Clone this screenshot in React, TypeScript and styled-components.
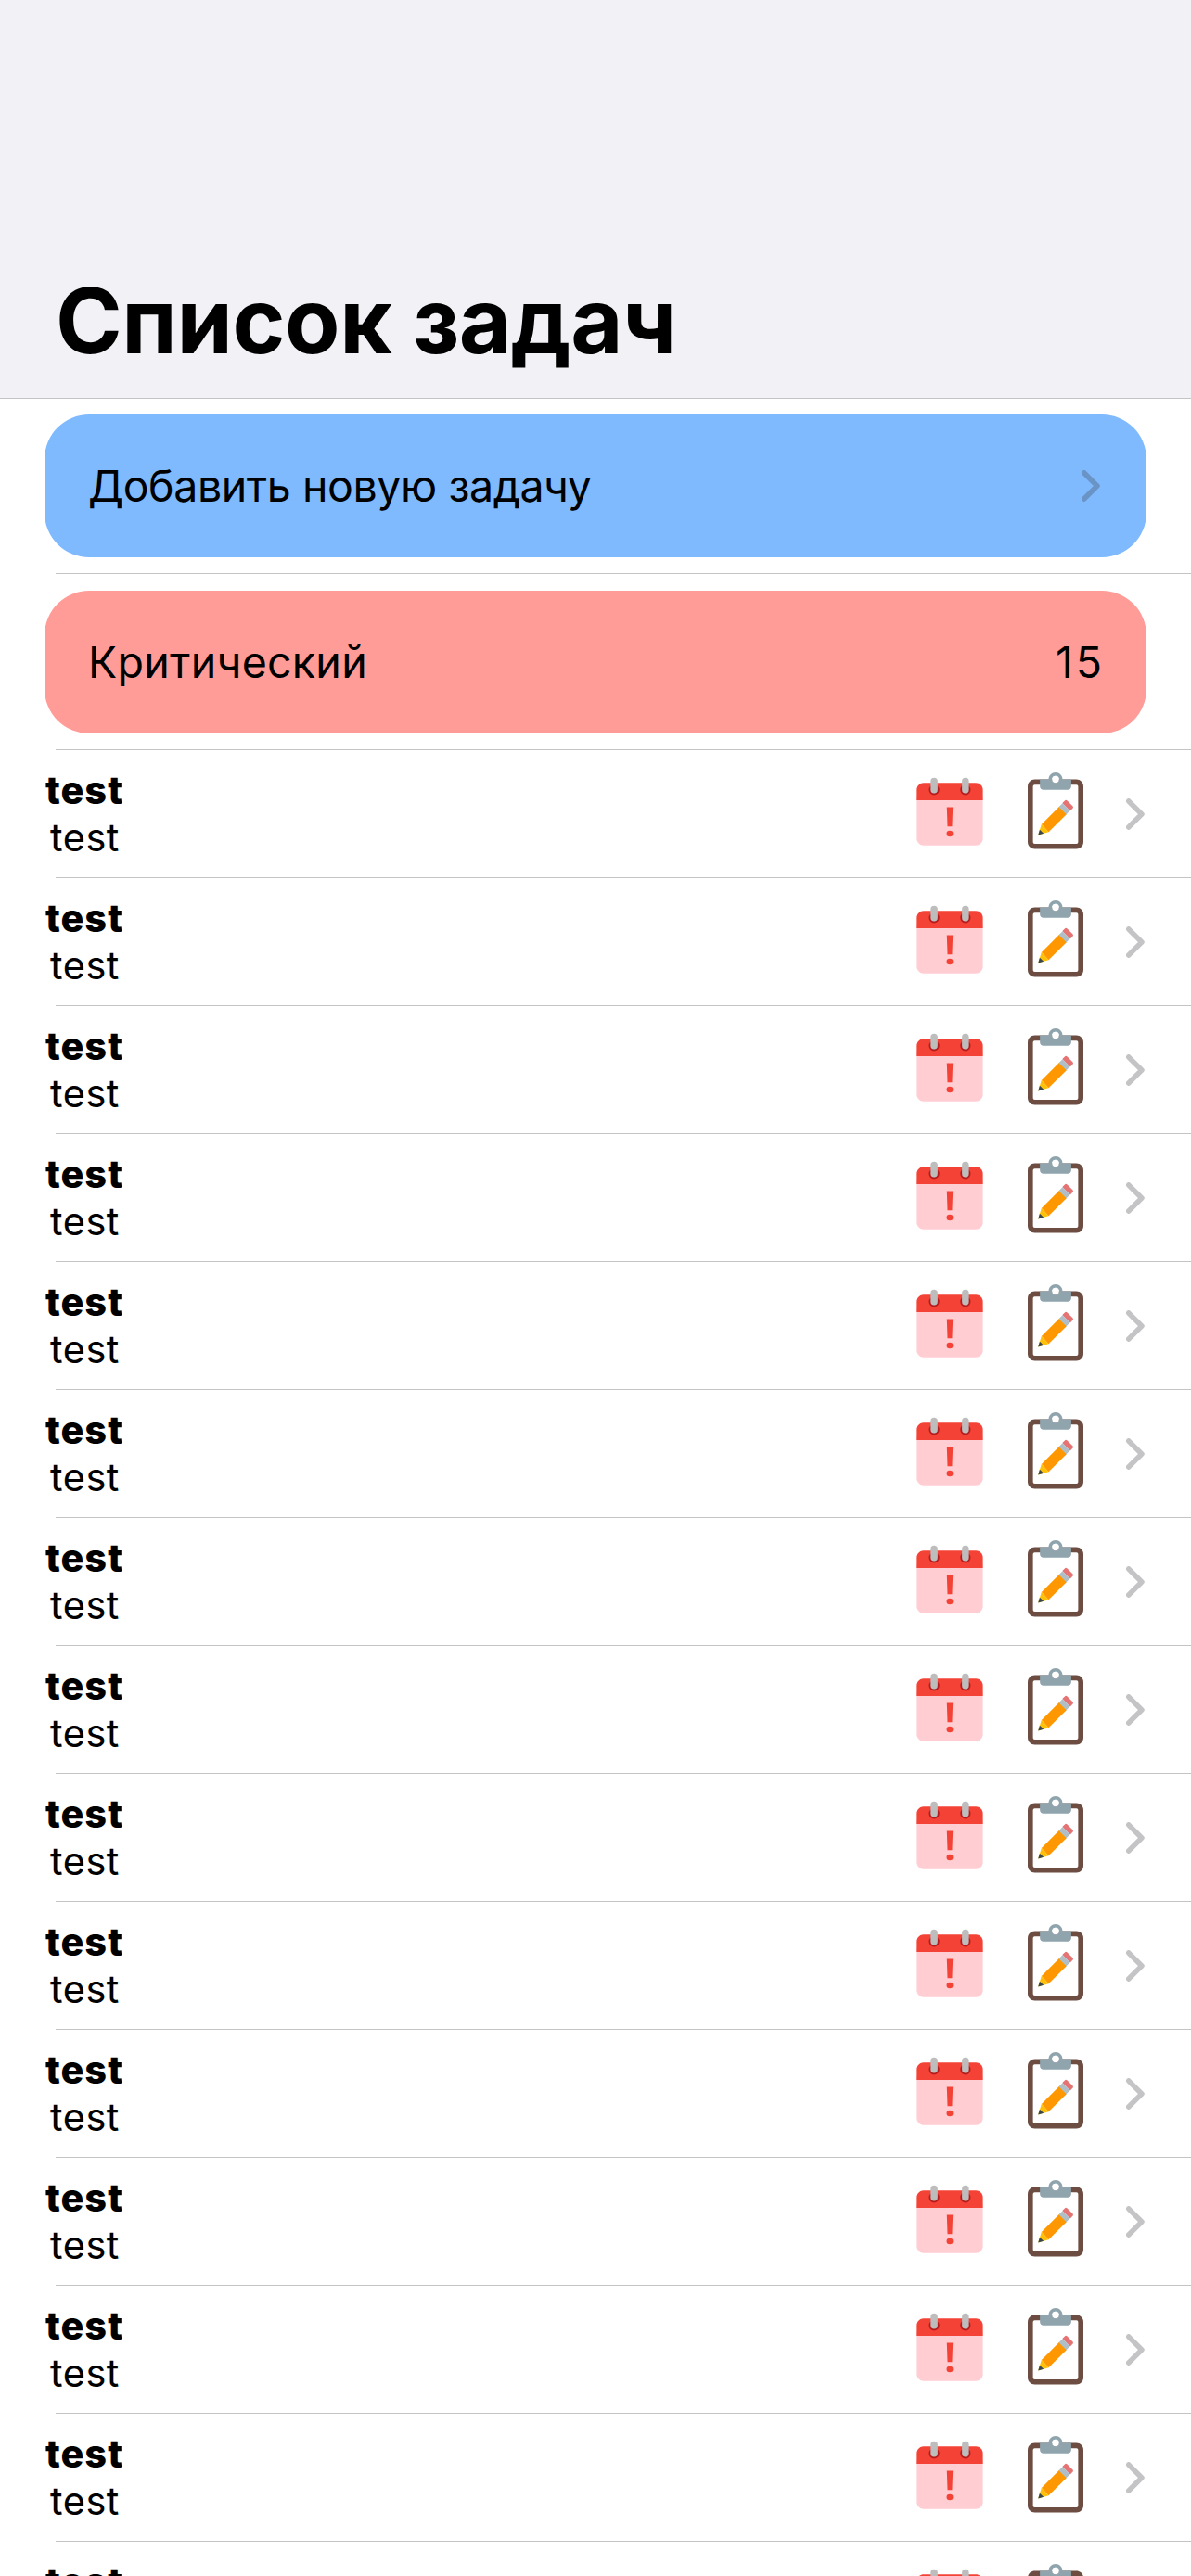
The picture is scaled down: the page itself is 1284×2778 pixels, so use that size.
import React from 'react';
import styled, { createGlobalStyle } from 'styled-components';

const GlobalStyle = createGlobalStyle`
  *, *::before, *::after { box-sizing: border-box; }
  html, body { margin: 0; padding: 0; }
  body {
    background: #fff;
    color: #000;
    font-family: Inter, 'Liberation Sans', sans-serif;
  }
`;

const Screen = styled.main`
  width: 1284px;
  height: 2778px;
  overflow: hidden;
  background: #fff;
`;

const Header = styled.header`
  display: flex;
  align-items: flex-end;
  height: 430px;
  padding: 0 60px 23px;
  background: #f2f1f6;
  border-bottom: 1px solid #c4c4c6;
`;

const Title = styled.h1`
  margin: 0;
  font-size: 97px;
  font-weight: 700;
  line-height: 120px;
  letter-spacing: -0.4px;
  white-space: nowrap;
`;

const List = styled.ul`
  margin: 0;
  padding: 0;
  list-style: none;
`;

const Item = styled.li<{ $height: number; $pad?: string }>`
  display: flex;
  flex-direction: column;
  height: ${(p) => p.$height}px;
  padding: ${(p) => p.$pad ?? '0'};

  &::after {
    content: '';
    flex: none;
    height: 1px;
    margin-left: 60px;
    background: #c4c4c6;
  }
`;

const Pill = styled.div<{ $color: string }>`
  display: flex;
  flex: none;
  align-items: center;
  justify-content: space-between;
  height: 154px;
  margin: 0 48px 17px;
  padding: 0 50px 0 47px;
  border-radius: 48px;
  background: ${(p) => p.$color};
`;

const PillLabel = styled.span<{ $tracking: number }>`
  font-size: 46.5px;
  line-height: 60px;
  letter-spacing: ${(p) => p.$tracking}px;
  white-space: nowrap;
`;

const Count = styled(PillLabel)`
  margin-right: -4.7px;
`;

const TaskBody = styled.div`
  display: flex;
  flex: 1;
  align-items: center;
  padding: 0 50px 0 49px;
`;

const TaskText = styled.div`
  display: flex;
  flex-direction: column;
  align-items: center;
  margin-right: auto;
`;

const TaskName = styled.span`
  font-size: 41.5px;
  font-weight: 800;
  line-height: 51px;
  letter-spacing: 1px;
`;

const TaskNote = styled.span`
  padding-left: 1px;
  font-size: 41.5px;
  font-weight: 430;
  line-height: 51px;
  letter-spacing: 0.5px;
`;

const IconGroup = styled.div`
  display: flex;
  gap: 24px;
  margin-right: 31px;
`;

const Icon = styled.svg`
  display: block;
  width: 90px;
  height: 90px;
`;

const ChevronIcon = styled.svg`
  display: block;
  flex: none;
  width: 20px;
  height: 34px;
`;

const Chevron = () => (
  <ChevronIcon viewBox="0 0 20 34" fill="none">
    <path
      d="M2.8 2.9 16.9 17 2.8 31.1"
      stroke="#3c3c43"
      strokeOpacity="0.3"
      strokeWidth="5.6"
      strokeLinecap="round"
      strokeLinejoin="round"
    />
  </ChevronIcon>
);

const OverdueCalendar = () => (
  <Icon viewBox="0 0 48 48">
    <path fill="#ffcdd2" d="M5 38V14h38v24c0 2.2-1.8 4-4 4H9c-2.2 0-4-1.8-4-4z" />
    <path fill="#f44336" d="M43 10v6H5v-6c0-2.2 1.8-4 4-4h30c2.2 0 4 1.8 4 4z" />
    <circle cx="33" cy="10" r="3" fill="#b71c1c" />
    <circle cx="15" cy="10" r="3" fill="#b71c1c" />
    <rect x="31" y="3" width="4" height="9" rx="2" fill="#bdbdbd" />
    <rect x="13" y="3" width="4" height="9" rx="2" fill="#bdbdbd" />
    <path fill="#f44336" d="M22.3 20h3.4l-.4 11h-2.6z" />
    <ellipse cx="24" cy="35.2" rx="1.85" ry="1.75" fill="#f44336" />
  </Icon>
);

const ClipboardPencil = () => (
  <Icon viewBox="0 0 48 48">
    <path fill="#6d4c41" d="M36 4H12c-2.2 0-4 1.8-4 4v32c0 2.2 1.8 4 4 4h24c2.2 0 4-1.8 4-4V8c0-2.2-1.8-4-4-4z" />
    <rect x="11" y="7" width="26" height="34" rx="1" fill="#fff" />
    <path
      fill="#90a4ae"
      fillRule="evenodd"
      d="M28 4c0-2.2-1.8-4-4-4s-4 1.8-4 4h-5v4c0 1.1.9 2 2 2h14c1.1 0 2-.9 2-2V4zM24 6c-1.1 0-2-.9-2-2s.9-2 2-2 2 .9 2 2-.9 2-2 2z"
    />
    <circle cx="24" cy="4" r="2" fill="#fff" />
    <path fill="#e57373" d="M33.8 19.3 30.7 16.2c-.4-.4-1-.4-1.4 0l-1.4 1.4 4.5 4.5 1.4-1.4c.4-.4.4-1 0-1.4z" />
    <path fill="#ff9800" d="m15.9 29.9 10.4-10.4 4.1 4.5L20 34.3z" />
    <path fill="#b0bec5" d="m25.9 19.8 2.1-2.1 4.3 4.3-2.1 2.1z" />
    <path fill="#ffc107" d="M15.9 29.9 14 36l6-1.8z" />
    <path fill="#37474f" d="M14.9 32.9 14 36l3.1-.9z" />
  </Icon>
);

const tasks = Array.from({ length: 15 }, (_, id) => ({ id, name: 'test', note: 'test' }));

export default function App() {
  return (
    <Screen>
      <GlobalStyle />
      <Header>
        <Title>Список задач</Title>
      </Header>
      <List>
        <Item $height={189} $pad="17px 0 0">
          <Pill $color="#7fbaff">
            <PillLabel $tracking={-0.43}>Добавить новую задачу</PillLabel>
            <Chevron />
          </Pill>
        </Item>
        <Item $height={190} $pad="18px 0 0">
          <Pill $color="#ff9c97">
            <PillLabel $tracking={0.28}>Критический</PillLabel>
            <Count $tracking={2.7}>{tasks.length}</Count>
          </Pill>
        </Item>
        {tasks.map((task) => (
          <Item key={task.id} $height={138}>
            <TaskBody>
              <TaskText>
                <TaskName>{task.name}</TaskName>
                <TaskNote>{task.note}</TaskNote>
              </TaskText>
              <IconGroup>
                <OverdueCalendar />
                <ClipboardPencil />
              </IconGroup>
              <Chevron />
            </TaskBody>
          </Item>
        ))}
      </List>
    </Screen>
  );
}
